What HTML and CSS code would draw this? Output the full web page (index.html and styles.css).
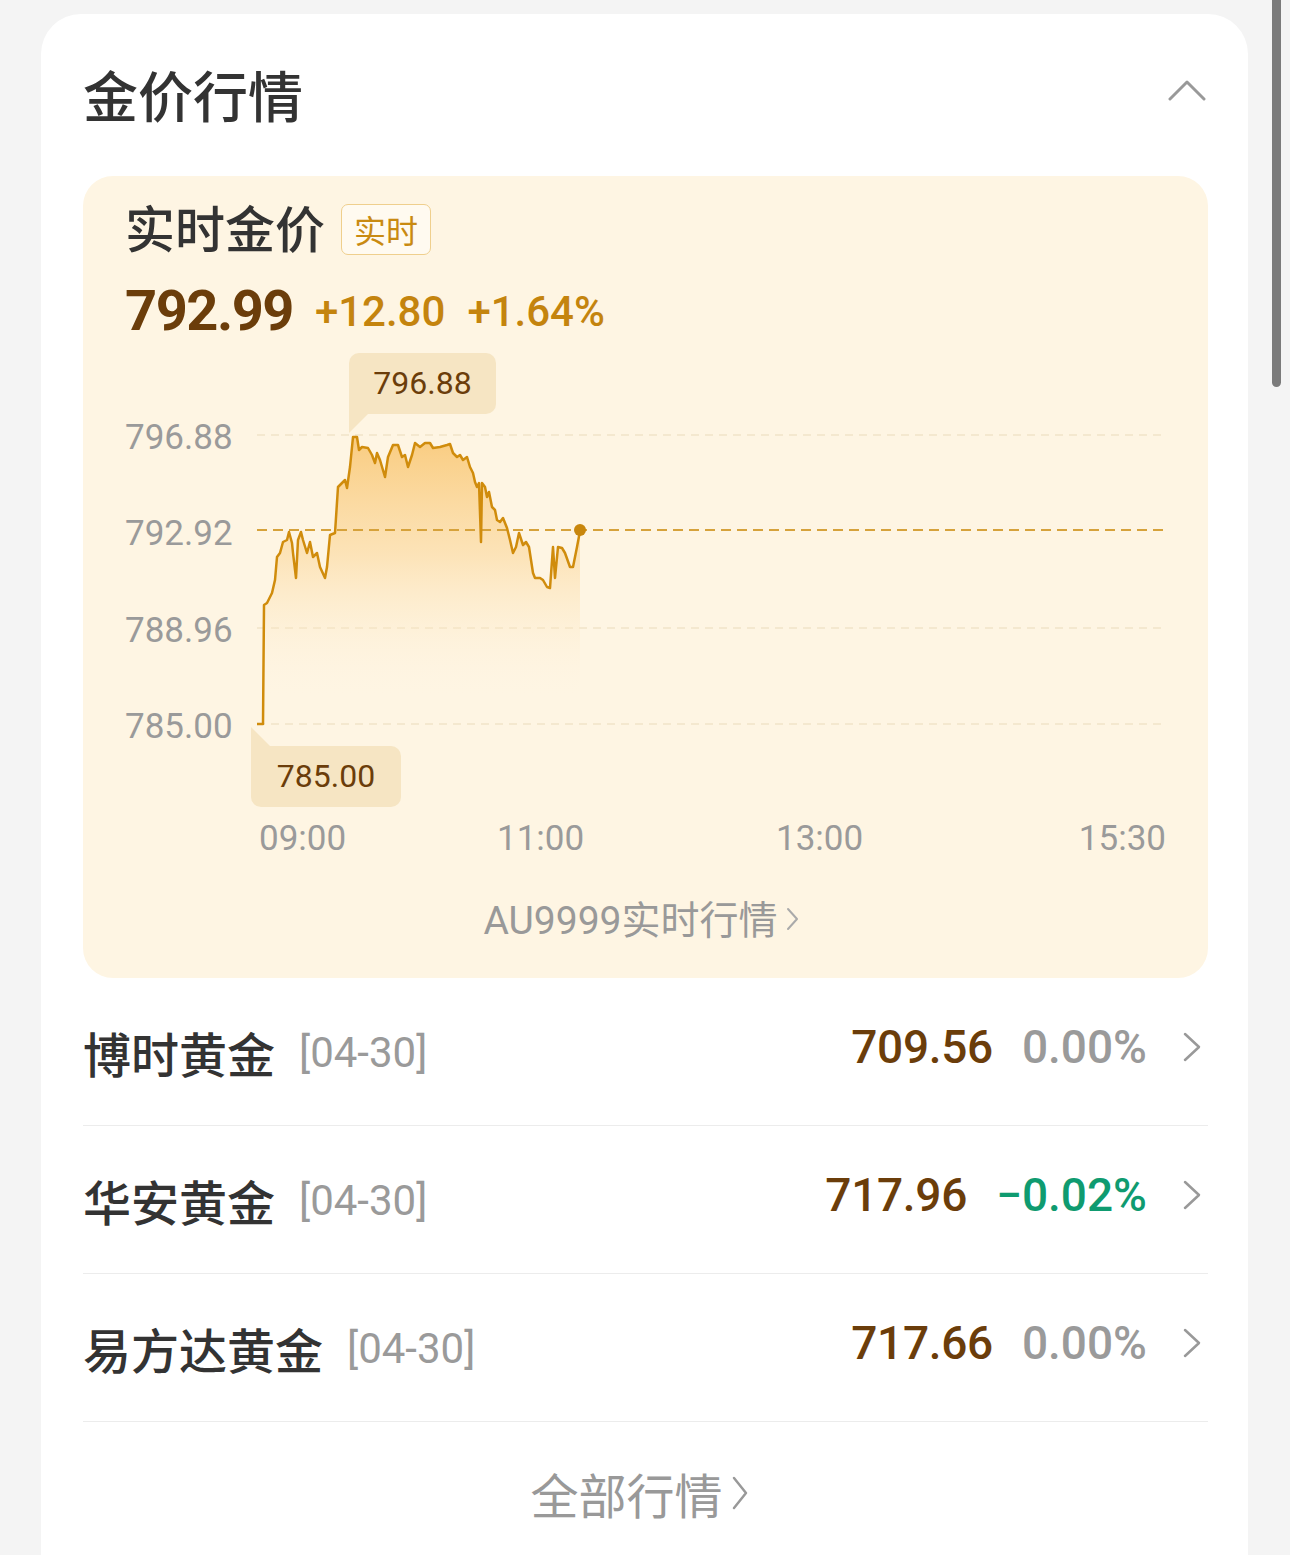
FILE: index.html
```html
<!DOCTYPE html>
<html lang="zh-CN">
<head>
<meta charset="utf-8">
<title>金价行情</title>
<link rel="stylesheet" href="styles.css">
</head>
<body>
<div class="scrollbar"></div>
<main class="card">
  <header class="card-head">
    <h1 class="card-title">金价行情</h1>
    <svg class="chev-up" width="38" height="22" viewBox="0 0 38 22"><path d="M2 20 L19 3 L36 20" fill="none" stroke="#999" stroke-width="3" stroke-linecap="round" stroke-linejoin="round"/></svg>
  </header>

  <section class="panel">
    <div class="panel-title">
      <span class="panel-name">实时金价</span>
      <span class="badge">实时</span>
    </div>
    <div class="quote">
      <span class="price">792.99</span>
      <span class="chg">+12.80</span>
      <span class="chg">+1.64%</span>
    </div>

    <div class="chart">
      <div class="plot-row">
        <div class="yaxis">
          <span>796.88</span>
          <span>792.92</span>
          <span>788.96</span>
          <span>785.00</span>
        </div>
        <svg class="plot" width="909" height="385" viewBox="257 387 909 385">
          <defs>
            <linearGradient id="fill" x1="0" y1="435" x2="0" y2="700" gradientUnits="userSpaceOnUse">
              <stop offset="0" stop-color="#f9c979" stop-opacity="0.95"/>
              <stop offset="0.45" stop-color="#fbd79a" stop-opacity="0.6"/>
              <stop offset="1" stop-color="#fef5e3" stop-opacity="0"/>
            </linearGradient>
          </defs>
          <line x1="257" y1="435" x2="1166" y2="435" class="grid"/>
          <line x1="257" y1="628" x2="1166" y2="628" class="grid"/>
          <line x1="257" y1="724" x2="1166" y2="724" class="grid"/>
          <path class="area" d="M257 724 L263 724 L264 605 L267 603 L272 593 L275 580 L277 557 L280 553 L283 542 L287 540 L289 532 L292 543 L293 553 L296 578 L298 540 L301 532 L303 540 L307 553 L310 542 L313 557 L317 553 L320 567 L325 578 L327 567 L330 535 L335 533 L338 487 L342 483 L345 480 L347 488 L350 467 L353 437 L357 437 L359 450 L362 447 L368 448 L372 455 L375 463 L377 453 L380 460 L385 477 L388 457 L393 445 L398 445 L402 457 L405 455 L408 467 L412 455 L415 443 L420 447 L425 443 L430 443 L433 448 L440 447 L447 445 L450 444 L453 453 L457 457 L460 455 L463 460 L467 457 L470 467 L473 473 L475 482 L477 487 L479 483 L481 542 L482 483 L485 487 L487 497 L489 492 L492 507 L495 510 L497 520 L500 522 L503 518 L507 528 L510 540 L513 553 L516 547 L519 533 L523 545 L526 542 L529 547 L533 573 L535 578 L540 578 L543 580 L547 587 L550 588 L553 547 L555 578 L558 547 L562 548 L565 553 L570 567 L573 567 L577 547 L580 531 L580 724 Z"/>
          <line x1="257" y1="530" x2="1166" y2="530" class="base"/>
          <path class="line" d="M257 724 L263 724 L264 605 L267 603 L272 593 L275 580 L277 557 L280 553 L283 542 L287 540 L289 532 L292 543 L293 553 L296 578 L298 540 L301 532 L303 540 L307 553 L310 542 L313 557 L317 553 L320 567 L325 578 L327 567 L330 535 L335 533 L338 487 L342 483 L345 480 L347 488 L350 467 L353 437 L357 437 L359 450 L362 447 L368 448 L372 455 L375 463 L377 453 L380 460 L385 477 L388 457 L393 445 L398 445 L402 457 L405 455 L408 467 L412 455 L415 443 L420 447 L425 443 L430 443 L433 448 L440 447 L447 445 L450 444 L453 453 L457 457 L460 455 L463 460 L467 457 L470 467 L473 473 L475 482 L477 487 L479 483 L481 542 L482 483 L485 487 L487 497 L489 492 L492 507 L495 510 L497 520 L500 522 L503 518 L507 528 L510 540 L513 553 L516 547 L519 533 L523 545 L526 542 L529 547 L533 573 L535 578 L540 578 L543 580 L547 587 L550 588 L553 547 L555 578 L558 547 L562 548 L565 553 L570 567 L573 567 L577 547 L580 531"/>
          <circle cx="580" cy="530" r="6" fill="#c8860c"/>
        </svg>
      </div>
      <div class="xaxis">
        <span>09:00</span>
        <span>11:00</span>
        <span>13:00</span>
        <span>15:30</span>
      </div>
      <div class="tip tip-high">796.88</div>
      <div class="tip tip-low">785.00</div>
    </div>

    <a class="more" href="#">AU9999实时行情<svg width="14" height="26" viewBox="0 0 14 26"><path d="M2 3 L11 13 L2 23" fill="none" stroke="#aaa" stroke-width="2" stroke-linecap="round" stroke-linejoin="round"/></svg></a>
  </section>

  <ul class="list">
    <li class="row">
      <div class="row-name"><span class="fund">博时黄金</span><span class="date">[04-30]</span></div>
      <div class="row-val"><span class="val">709.56</span><span class="pct">0.00%</span>
        <svg class="chev" width="20" height="32" viewBox="0 0 20 32"><path d="M3 3 L17 16 L3 29" fill="none" stroke="#999" stroke-width="2.5" stroke-linecap="round" stroke-linejoin="round"/></svg></div>
    </li>
    <li class="row">
      <div class="row-name"><span class="fund">华安黄金</span><span class="date">[04-30]</span></div>
      <div class="row-val"><span class="val">717.96</span><span class="pct down">−0.02%</span>
        <svg class="chev" width="20" height="32" viewBox="0 0 20 32"><path d="M3 3 L17 16 L3 29" fill="none" stroke="#999" stroke-width="2.5" stroke-linecap="round" stroke-linejoin="round"/></svg></div>
    </li>
    <li class="row">
      <div class="row-name"><span class="fund">易方达黄金</span><span class="date">[04-30]</span></div>
      <div class="row-val"><span class="val">717.66</span><span class="pct">0.00%</span>
        <svg class="chev" width="20" height="32" viewBox="0 0 20 32"><path d="M3 3 L17 16 L3 29" fill="none" stroke="#999" stroke-width="2.5" stroke-linecap="round" stroke-linejoin="round"/></svg></div>
    </li>
  </ul>

  <a class="all" href="#">全部行情<svg width="18" height="36" viewBox="0 0 18 36"><path d="M3 3 L15 18 L3 33" fill="none" stroke="#999" stroke-width="2.5" stroke-linecap="round" stroke-linejoin="round"/></svg></a>
</main>
</body>
</html>
```

FILE: styles.css
```css
html, body {
  margin: 0;
  padding: 0;
  height: 1555px;
  overflow: hidden;
}
body {
  background: #f4f4f4;
  font-family: Roboto, "Noto Sans CJK SC", sans-serif;
  color: #333;
}
.scrollbar {
  position: absolute;
  left: 1272px;
  top: 0;
  width: 9px;
  height: 387px;
  background: #7b7b7b;
  border-radius: 0 0 5px 5px;
}
.card {
  margin: 14px 0 0 41px;
  width: 1207px;
  min-height: 1620px;
  box-sizing: border-box;
  background: #fff;
  border-radius: 40px 40px 0 0;
  padding: 0 40px 0 42px;
}
.card-head {
  height: 162px;
  display: flex;
  align-items: center;
  justify-content: space-between;
}
.card-title {
  margin: 0 0 4px 0;
  font-family: "Noto Sans CJK SC", sans-serif;
  font-size: 55px;
  font-weight: 500;
  line-height: 1;
  color: #333;
}
.chev-up {
  margin: 0 2px 10px 0;
}

.panel {
  background: #fef5e3;
  border-radius: 30px;
  padding: 20px 42px 32px 42px;
  display: flex;
  flex-direction: column;
}
.panel-title {
  display: flex;
  align-items: center;
  height: 60px;
  gap: 16px;
}
.panel-name {
  font-family: "Noto Sans CJK SC", sans-serif;
  font-size: 50px;
  font-weight: 500;
  line-height: 60px;
  color: #333;
}
.badge {
  font-family: "Noto Sans CJK SC", sans-serif;
  font-size: 32px;
  line-height: 49px;
  padding: 0 12px;
  border: 1px solid #efcf8d;
  border-radius: 7px;
  background: #fffaf0;
  color: #c98a12;
  margin-top: 6px;
}
.quote {
  margin-top: 25px;
  height: 60px;
  display: flex;
  align-items: center;
  gap: 22px;
}
.price {
  font-size: 56px;
  font-weight: 700;
  letter-spacing: -1.5px;
  line-height: 60px;
  color: #6b3d0a;
}
.chg {
  font-size: 42px;
  font-weight: 500;
  line-height: 60px;
  color: #c4840e;
  margin-top: 2px;
}

.chart {
  position: relative;
  padding-top: 46px;
}
.plot-row {
  display: flex;
  gap: 26px;
}
.yaxis {
  width: 106px;
  display: flex;
  flex-direction: column;
  padding-top: 3px;
}
.yaxis span {
  height: 96.33px;
  line-height: 96.33px;
  text-align: right;
  font-size: 35px;
  color: #9a9a9a;
}
.plot {
  display: block;
}
.grid {
  stroke: #f1e3c9;
  stroke-width: 1.5;
  stroke-dasharray: 8 6;
}
.base {
  stroke: #d6a23b;
  stroke-width: 2;
  stroke-dasharray: 10 6;
}
.area {
  fill: url(#fill);
}
.line {
  fill: none;
  stroke: #d08c0c;
  stroke-width: 2.5;
  stroke-linejoin: round;
}
.xaxis {
  margin: 44px 0 0 132px;
  height: 40px;
  display: grid;
  grid-template-columns: 240px 279px 1fr auto;
  font-size: 35px;
  line-height: 40px;
  color: #9a9a9a;
}
.xaxis span:first-child {
  padding-left: 2px;
}
.tip {
  position: absolute;
  height: 61px;
  line-height: 61px;
  text-align: center;
  background: #f6e5c3;
  border-radius: 10px;
  font-size: 32px;
  color: #6b3d0a;
}
.tip::after {
  content: "";
  position: absolute;
  left: 0;
  width: 0;
  height: 0;
  border-left: 19px solid #f6e5c3;
}
.tip-high {
  left: 224px;
  top: 12px;
  width: 147px;
  border-bottom-left-radius: 0;
}
.tip-high::after {
  top: 61px;
  border-bottom: 19px solid transparent;
}
.tip-low {
  left: 126px;
  top: 405px;
  width: 150px;
  border-top-left-radius: 0;
}
.tip-low::after {
  top: -19px;
  border-top: 19px solid transparent;
}
.more {
  margin-top: 37px;
  height: 50px;
  display: flex;
  align-items: center;
  justify-content: center;
  gap: 8px;
  font-size: 39px;
  line-height: 50px;
  color: #999;
  text-decoration: none;
  padding-right: 8px;
}
.more svg {
  margin-top: -4px;
}

.list {
  list-style: none;
  margin: 0;
  padding: 0;
}
.row {
  height: 147px;
  border-bottom: 1px solid #ececec;
  display: flex;
  align-items: center;
  justify-content: space-between;
}
.row-name {
  display: flex;
  align-items: center;
  gap: 24px;
}
.fund {
  font-family: "Noto Sans CJK SC", sans-serif;
  font-size: 48px;
  font-weight: 500;
  line-height: 60px;
  color: #333;
}
.date {
  font-size: 42px;
  color: #9a9a9a;
  line-height: 60px;
  margin-top: 2px;
}
.row-val {
  display: flex;
  align-items: center;
  margin-top: -10px;
}
.val {
  font-size: 46px;
  font-weight: 500;
  letter-spacing: -0.3px;
  color: #6b3d0a;
  line-height: 60px;
}
.pct {
  margin-left: 29px;
  font-size: 46px;
  font-weight: 500;
  color: #9a9a9a;
  line-height: 60px;
}
.pct.down {
  color: #0f9b70;
}
.chev {
  margin: 0 6px 0 35px;
}
.all {
  height: 142px;
  padding: 0 12px 8px 0;
  display: flex;
  align-items: center;
  justify-content: center;
  gap: 8px;
  font-family: "Noto Sans CJK SC", sans-serif;
  font-size: 48px;
  color: #999;
  text-decoration: none;
}
```
